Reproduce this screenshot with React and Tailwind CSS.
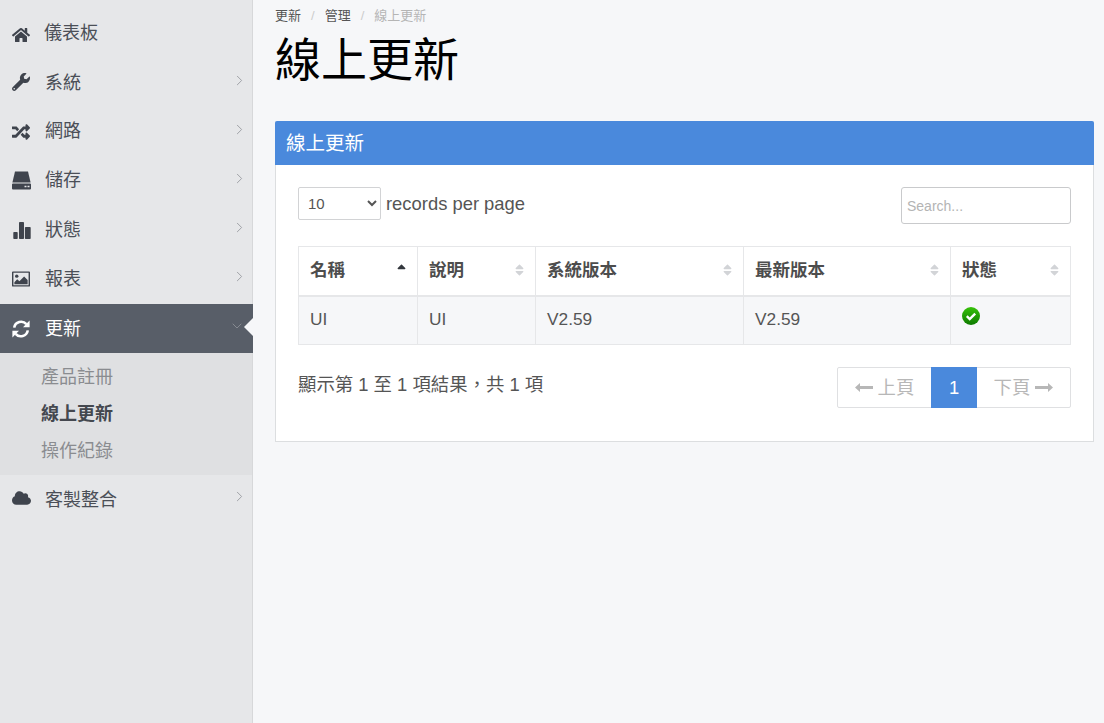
import React from "react";
import { FaHome, FaWrench, FaRandom, FaCloud, FaSort, FaSortUp } from "react-icons/fa";
import { ChevronRight, ChevronDown } from "lucide-react";

const Hdd = (p) => (
  <svg viewBox="0 0 19 18" {...p} fill="currentColor">
    <path d="M3 0h13l2.6 11H.4z" />
    <path fillRule="evenodd" d="M1 12h17a1 1 0 0 1 1 1v4a1 1 0 0 1-1 1H1a1 1 0 0 1-1-1v-4a1 1 0 0 1 1-1zm11.5 2.2v1.6h2v-1.6zm3 0v1.6h2v-1.6z" />
  </svg>
);
const Bars = (p) => (
  <svg viewBox="0 0 18 17" {...p} fill="currentColor">
    <rect x="0.3" y="10" width="4.4" height="7" rx="0.8" />
    <rect x="6" y="0" width="5" height="17" rx="0.8" />
    <rect x="11.9" y="5" width="5.8" height="12" rx="0.8" />
  </svg>
);
const Pic = (p) => (
  <svg viewBox="0 0 19 16" {...p} fill="currentColor">
    <path fillRule="evenodd" d="M1 0h17a1 1 0 0 1 1 1v14a1 1 0 0 1-1 1H1a1 1 0 0 1-1-1V1a1 1 0 0 1 1-1zm.5 1.5v13h16v-13z" />
    <circle cx="5" cy="5" r="1.8" />
    <path d="M2.5 13.5v-2.2l3-3 2.3 2.2 5-5.2 3.7 3.8v4.4z" />
  </svg>
);
const Refresh = (p) => (
  <svg viewBox="0 0 18 18" {...p} fill="none" stroke="currentColor" strokeWidth="2.6">
    <path d="M2.2 7.6A7 7 0 0 1 14.4 4.2" />
    <path d="M15.8 10.4A7 7 0 0 1 3.6 13.8" />
    <path d="M17.6 0.6v6.6h-6.6z" fill="currentColor" stroke="none" />
    <path d="M0.4 17.4v-6.6h6.6z" fill="currentColor" stroke="none" />
  </svg>
);
const Check = () => (
  <svg viewBox="0 0 18 18" className="block w-[18px] h-[18px]">
    <defs>
      <linearGradient id="g" x1="0" y1="0" x2="0" y2="1">
        <stop offset="0" stopColor="#37c20a" />
        <stop offset="1" stopColor="#0d7a00" />
      </linearGradient>
    </defs>
    <circle cx="9" cy="9" r="9" fill="url(#g)" />
    <path d="M4.8 9.2l2.9 2.8 5.5-5.4" fill="none" stroke="#fff" strokeWidth="2.4" />
  </svg>
);
const ArrowL = () => (
  <svg viewBox="0 0 18 9" className="w-[18px] h-[9px]" fill="currentColor">
    <path d="M0 4.5L5 0v3h13v3H5v3z" />
  </svg>
);
const ArrowR = () => (
  <svg viewBox="0 0 18 9" className="w-[18px] h-[9px]" fill="currentColor">
    <path d="M18 4.5L13 0v3H0v3h13v3z" />
  </svg>
);

function Item({ icon: Icon, label, cls, labelCls = "" }) {
  return (
    <div className="h-[49px] flex items-center pl-3 pr-[4.5px] text-[#4b4f57] text-[18px]">
      <span className="w-[19px] flex justify-start text-[#3f444d]"><Icon className={cls} /></span>
      <span className={`ml-[14px] ${labelCls}`}>{label}</span>
      <ChevronRight className="ml-auto w-[17px] h-[17px] mb-[7px] text-[#9a9ca1]" strokeWidth={1.3} />
    </div>
  );
}

function Th({ children, w, active }) {
  return (
    <th className={`${w} h-[49px] border border-[#e6e7e9] border-b-2 pl-[11px] pr-[11px] pb-[2px] text-left font-bold text-[17.5px] text-[#4d4d4d]`}>
      <div className="flex items-center justify-between">
        <span>{children}</span>
        {active ? <FaSortUp className="w-[9px] h-[14px] text-[#33373d]" /> : <FaSort className="w-[9px] h-[14px] text-[#d2d4d7]" />}
      </div>
    </th>
  );
}

const Td = ({ children }) => (
  <td className="h-[49px] border border-[#e6e7e9] pl-[11px] align-middle text-[17.3px] text-[#555]">{children}</td>
);

export default function App() {
  return (
    <div
      className="flex w-[1104px] h-[723px] overflow-hidden bg-[#f6f7f9]"
      style={{ fontFamily: '"Liberation Sans", "Noto Sans CJK TC", sans-serif' }}
    >
      <aside className="w-[253px] shrink-0 bg-[#e6e7e9] border-r border-[#d7d8da] pt-[10px]">
        <div className="h-[49px] flex items-center pl-3 text-[#4b4f57] text-[18px]">
          <span className="w-[19px] flex justify-start text-[#3f444d]"><FaHome className="w-[18px] h-[16px]" /></span>
          <span className="ml-[13px] mb-[2px]">儀表板</span>
        </div>
        <Item icon={FaWrench} label="系統" cls="w-[18px] h-[18px] mb-[3px]" />
        <Item icon={FaRandom} label="網路" cls="w-[18px] h-[18px] mb-[2px]" labelCls="mb-[2px]" />
        <Item icon={Hdd} label="儲存" cls="w-[19px] h-[19px] mb-[2px]" labelCls="mb-[2px]" />
        <Item icon={Bars} label="狀態" cls="ml-[1px] w-[18px] h-[17px]" />
        <Item icon={Pic} label="報表" cls="w-[18px] h-[16px] mb-[2px]" />
        <div className="relative h-[49px] -mr-px flex items-center pl-3 pr-[8px] bg-[#585e68] text-white text-[18px]">
          <span className="w-[19px] flex justify-start"><Refresh className="w-[18px] h-[18px]" /></span>
          <span className="ml-[14px] pt-[2px]">更新</span>
          <ChevronDown className="ml-auto w-[16px] h-[16px] mb-[6px] text-[#8d9198]" strokeWidth={1.3} />
          <span className="absolute right-0 top-[14px] w-0 h-0 border-y-[9px] border-y-transparent border-r-[9px] border-r-[#f6f7f9]" />
        </div>
        <div className="h-[122px] bg-[#dfe0e2] pt-[6px] pl-[41px] text-[18px] text-[#8a8c90]">
          <div className="h-[37px] leading-[37px]">產品註冊</div>
          <div className="h-[37px] leading-[37px] font-bold text-[#44484f]">線上更新</div>
          <div className="h-[37px] leading-[37px]">操作紀錄</div>
        </div>
        <Item icon={FaCloud} label="客製整合" cls="w-[19px] h-[16px] mb-[4px]" labelCls="pt-[2px]" />
      </aside>

      <main className="flex-1 pl-[22px] pr-[11px]">
        <div className="h-[32px] pt-[7px] flex items-start gap-[10px] text-[13px] leading-[18px] text-[#555]">
          <span>更新</span>
          <span className="text-[#ccc]">/</span>
          <span>管理</span>
          <span className="text-[#ccc]">/</span>
          <span className="text-[#b5b5b5]">線上更新</span>
        </div>
        <h1 className="h-[89px] text-[46px] leading-[56px] text-black font-normal">線上更新</h1>

        <section className="h-[321px] bg-white border border-[#dcdee0] border-t-0 rounded-t-[2px]">
          <div className="h-[44px] -mx-px bg-[#4a89dc] rounded-t-[2px] text-white text-[19.5px] leading-[45px] pl-[11px]">線上更新</div>
          <div className="px-[22px] pt-[22px]">
            <div className="flex items-start justify-between h-[59px]">
              <div className="flex items-start gap-[5px]">
                <select className="w-[83px] h-[33px] bg-white border border-[#d2d3d5] rounded-[2px] pl-[5px] text-[15px] text-[#555]">
                  <option>10</option>
                </select>
                <span className="text-[18.4px] leading-[33px] text-[#555]">records per page</span>
              </div>
              <input
                placeholder="Search..."
                className="w-[170px] h-[37px] bg-white border border-[#c9cacc] rounded-[3px] px-[5px] text-[14px] placeholder:text-[#b4b4b4] outline-none"
              />
            </div>
            <table className="w-[772px] table-fixed border-collapse">
              <thead>
                <tr>
                  <Th w="w-[119px]" active>名稱</Th>
                  <Th w="w-[118px]">說明</Th>
                  <Th w="w-[208px]">系統版本</Th>
                  <Th w="w-[207px]">最新版本</Th>
                  <Th w="w-[120px]">狀態</Th>
                </tr>
              </thead>
              <tbody>
                <tr className="bg-[#f6f7f9]">
                  <Td>UI</Td>
                  <Td>UI</Td>
                  <Td>V2.59</Td>
                  <Td>V2.59</Td>
                  <Td><div className="mb-[8px]"><Check /></div></Td>
                </tr>
              </tbody>
            </table>
            <div className="flex items-start justify-between mt-[22px]">
              <span className="text-[18.4px] leading-[36px] text-[#555]">顯示第 1 至 1 項結果，共 1 項</span>
              <div className="flex h-[41px] w-[234px] border border-[#dfe0e2] rounded-[2px] text-[18.4px] text-[#b7b7b7]">
                <div className="w-[93px] flex items-center justify-center gap-[5px]"><ArrowL />上頁</div>
                <div className="w-[46px] -my-px flex items-center justify-center bg-[#4a89dc] text-white">1</div>
                <div className="flex-1 flex items-center justify-center gap-[5px]">下頁<ArrowR /></div>
              </div>
            </div>
          </div>
        </section>
      </main>
    </div>
  );
}
